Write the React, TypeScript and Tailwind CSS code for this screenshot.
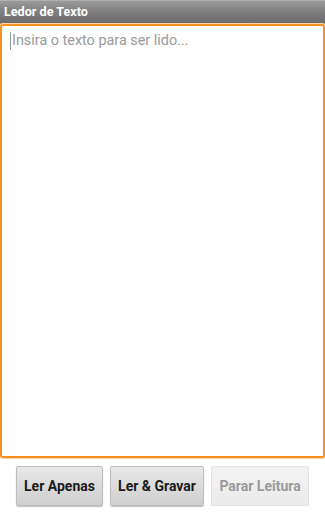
import React from "react";

export default function App() {
  return (
    <div
      className="w-[325px] h-[512px] bg-white flex flex-col overflow-hidden"
      style={{ fontFamily: "Roboto, 'Liberation Sans', sans-serif" }}
    >
      <div className="h-[24px] shrink-0 bg-gradient-to-b from-[#9a9a9a] via-[#7d7d7d] to-[#6a6a6a] flex items-center px-[4px] border-t border-[#b0b0b0]">
        <span className="text-white font-bold text-[12.6px] leading-none">Ledor de Texto</span>
      </div>
      <div className="h-[434px] shrink-0 mx-0 border-[2.5px] border-[#f7901e] rounded-[3px] shadow-[0_0_0_1px_#fcd3a0] px-[8px] pt-[5px]">
        <div className="flex items-center">
          <span className="w-px h-[18px] bg-[#999] mr-px" />
          <span className="text-[#9a9a9a] text-[14.4px] leading-[20px]">Insira o texto para ser lido...</span>
        </div>
      </div>
      <div className="flex justify-center gap-[7px] pt-[8px]">
        <button className="h-[40px] w-[87px] rounded-[2px] border border-[#bdbdbd] bg-gradient-to-b from-[#e8e8e8] to-[#cfcfcf] text-[#1a1a1a] font-bold text-[14px] shadow-[0_1px_1px_rgba(0,0,0,0.25)]">
          Ler Apenas
        </button>
        <button className="h-[40px] w-[94px] rounded-[2px] border border-[#bdbdbd] bg-gradient-to-b from-[#e8e8e8] to-[#cfcfcf] text-[#1a1a1a] font-bold text-[14px] shadow-[0_1px_1px_rgba(0,0,0,0.25)]">
          Ler &amp; Gravar
        </button>
        <button className="h-[40px] w-[98px] rounded-[2px] border border-[#e2e2e2] bg-gradient-to-b from-[#f3f3f3] to-[#ebebeb] text-[#9a9a9a] font-bold text-[14px]">
          Parar Leitura
        </button>
      </div>
    </div>
  );
}
